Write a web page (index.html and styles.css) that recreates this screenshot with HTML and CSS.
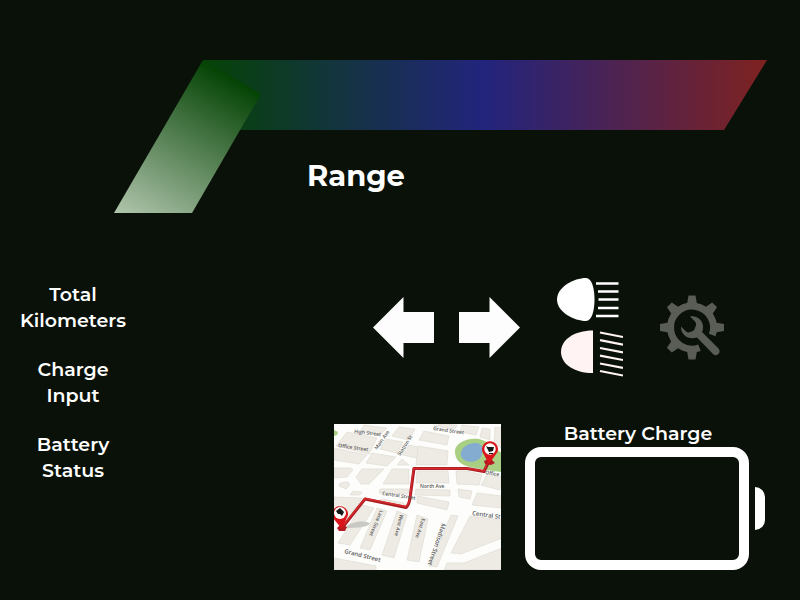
FILE: index.html
```html
<!DOCTYPE html>
<html lang="en">
<head>
<meta charset="utf-8">
<meta name="viewport" content="width=device-width, initial-scale=1">
<title>Range</title>
<link rel="stylesheet" href="styles.css">
</head>
<body>
<header class="gauge">
  <svg class="gauge-art" viewBox="0 0 800 213" aria-hidden="true">
    <defs>
      <linearGradient id="bar" gradientUnits="userSpaceOnUse" x1="203" y1="0" x2="767" y2="0">
        <stop offset="0" stop-color="#064306"/>
        <stop offset=".5" stop-color="#22247d"/>
        <stop offset="1" stop-color="#7f2220"/>
      </linearGradient>
      <linearGradient id="foot" gradientUnits="userSpaceOnUse" x1="232" y1="77" x2="144" y2="229">
        <stop offset="0" stop-color="#044304"/>
        <stop offset="1" stop-color="#b0c5ac"/>
      </linearGradient>
    </defs>
    <path fill="url(#bar)" d="M203 60H767L724 130H203Z"/>
    <path fill="url(#foot)" d="M203 60L261 94L192 213H114Z"/>
  </svg>
  <h1 class="range">Range</h1>
</header>
<main class="panel">
  <section class="stats">
    <h2>Total Kilometers</h2>
    <h2>Charge Input</h2>
    <h2>Battery Status</h2>
  </section>
  <section class="side">
    <div class="controls">
      <div class="turns">
        <button aria-label="Left"><svg width="61" height="61" viewBox="0 0 61 61"><path fill="#fdfdfd" d="M0 30.5L30.5 0V15H61V46H30.5V61Z"/></svg></button>
        <button aria-label="Right"><svg width="61" height="61" viewBox="0 0 61 61"><path fill="#fdfdfd" d="M61 30.5L30.5 0V15H0V46H30.5V61Z"/></svg></button>
      </div>
      <div class="lamps">
        <button aria-label="High beam"><svg width="66" height="43" viewBox="0 0 66 43"><path fill="#fff" d="M0 21.5C0 9 17 0 29 0C35 0 37.500 11 37.500 21.500C37.500 32 35 43 29 43C17 43 0 34 0 21.500Z"/><path stroke="#fff" stroke-width="2.600" d="M39 5.500H61.500M41 13.500H61.500M41.500 21.500H61.500M41 30H61.500M39 38H61.500"/></svg></button>
        <button aria-label="Low beam"><svg width="66" height="47" viewBox="0 0 66 47"><path fill="#fff4f3" d="M36 0.500V43C17 43 4 34 4 21.700C4 10 17 0.500 36 0.500Z"/><path stroke="#fff4f3" stroke-width="2.200" d="M43 2.500L66 7M43 10.200L66 14.700M43 18L66 22.400M43 25.700L66 30M43 33.500L66 37.800M43 41L66 45.500"/></svg></button>
      </div>
      <button aria-label="Service"><svg width="64" height="65" viewBox="0 0 64 65">
        <defs><path id="tooth" d="M28.500 0.500H35.500L37.500 12H26.500Z"/></defs>
        <g fill="#595d55">
          <use href="#tooth"/>
          <use href="#tooth" transform="rotate(45 32 32.500)"/>
          <use href="#tooth" transform="rotate(90 32 32.500)"/>
          <use href="#tooth" transform="rotate(180 32 32.500)"/>
          <use href="#tooth" transform="rotate(225 32 32.500)"/>
          <use href="#tooth" transform="rotate(270 32 32.500)"/>
          <use href="#tooth" transform="rotate(315 32 32.500)"/>
          <path d="M30 21.500C37 20 44 26 43 33Q43 35 42 37L58.500 53.500C62 57.500 56.500 62.500 53 59L37 42.500C29 45.500 20.500 40 21 31.500L26 36.500Q28 38 30 37L33 36Q34.500 35 35 33L36 30Q36.500 28 35 26.500Z"/>
        </g>
        <path fill="none" stroke="#595d55" stroke-width="7" d="M39.500 52.700A21.500 21.500 0 1 1 52.200 40"/>
      </svg></button>
    </div>
    <div class="details">
      <svg class="map" viewBox="0 0 167 146" role="img" aria-label="Route map">
        <rect width="167" height="146" fill="#fdfdfc"/>
        <g fill="#eeebe5" stroke="#dcd8ce" stroke-width=".6">
          <path d="M13 8L43 14L35 30L2 22ZM30 1L53 4L46 11L26 7ZM65 3L81 5L75 16L58 12ZM52 15L69 18L63 29L46 25ZM75 21L97 26L94 37L65 30ZM0 24L33 31L25 40L0 36ZM38 29L62 33L53 42L32 39ZM68 35L75 41H63ZM0 44H17L19 46L13 53L0 54ZM28 45H50L35 60H27L22 53ZM58 45H75V60H49ZM6 59L14 58L16 61L12 65L5 62ZM46 65H75L74 70L45 69ZM19 67L28 68L26 71L16 71Z"/>
          <path d="M90 7L115 12L113 21L85 16ZM108 0L123 1L121 5L100 2ZM128 1L145 3L142 11L126 8ZM148 4L156 5V16L146 13ZM161 3L168 4V24L160 20ZM84 22L114 27L113 41H82ZM83 47H114L115 59H82ZM122 47H133L148 51L145 61L123 60ZM153 50L168 53L166 66L147 61ZM82 65L116 66V72L81 71ZM124 65L138 67L136 75L125 73Z"/>
          <path d="M28 81L40 84L16 121L4 119ZM43 84L53 87L36 126L26 124ZM63 87L73 91L60 134L48 131ZM83 91L94 95L85 138L73 136ZM41 78L48 75L70 79V82ZM0 73L28 74L14 94L0 90ZM0 134L42 142V146H0ZM83 72L115 78L113 86L83 79ZM117 91L124 92L103 143L95 142ZM136 92L168 96V114L127 130L117 129ZM168 124V146H110L113 139H130ZM143 69L168 72V84L138 81Z"/>
        </g>
        <path fill="#a9cf83" d="M0 6L4 8L3 11L0 12ZM121 28C120 20 132 13 145 15C154 17 161 25 168 29V48L152 46L136 43C127 41 121 36 121 28Z"/>
        <path fill="#83acd0" d="M127 32C125 24 135 18 143 19C151 21 149 28 147 33C143 40 129 39 127 32Z"/>
        <path fill="#c8c8c5" d="M10 104C17 98 27 96 36 99C34 104 19 104 10 104Z"/>
        <path fill="none" stroke="#a51d21" stroke-width="3" stroke-linejoin="round" d="M8 104L31 75L72 83.500Q75 81 76 74L80 44.500H133L150 47.500L155 37"/>
        <path fill="none" stroke="#d62a2e" stroke-width="1.500" stroke-linejoin="round" d="M8 103L31 74.500L72 82.500Q75 80 76 73L79.500 44.500H133L150 47L154 37"/>
        <g class="map-text">
          <text transform="translate(20 9) rotate(7)">High Street</text>
          <text transform="translate(4 23) rotate(8)">Office Street</text>
          <text transform="translate(43 26) rotate(-55)">Main Ave</text>
          <text transform="translate(66 32) rotate(-57)">Station St</text>
          <text transform="translate(99 6) rotate(8)">Grand Street</text>
          <text transform="translate(86 64)">North Ave</text>
          <text transform="translate(48 71) rotate(8)">Central Street</text>
          <text transform="translate(151 50) rotate(9)">Office</text>
          <text transform="translate(46 86) rotate(113)">Lane Street</text>
          <text transform="translate(66 90) rotate(104)">West Ave</text>
          <text transform="translate(88 94) rotate(109)">East Ave</text>
          <text class="large" transform="translate(108 99) rotate(109)">Madison Street</text>
          <text class="large" transform="translate(138 91) rotate(8)">Central St</text>
          <text class="large" transform="translate(10 129) rotate(14)">Grand Street</text>
        </g>
        <path fill="#b51a20" d="M150 37L154 35L158 36L161 39L157 41L151 40ZM3 104L7 100L13 103L11 107L5 107Z"/>
        <path fill="#d9141a" d="M155 40L148.500 28A8 8 0 1 1 163.500 28ZM8 105L-1 94A8 8 0 1 1 14 91Z"/>
        <circle cx="156" cy="25" r="5.700" fill="#fff"/>
        <circle cx="6" cy="89" r="6" fill="#fff"/>
        <path fill="#151515" d="M152 22L154 23H160L159 27L155 28ZM155 29H159V30H155ZM2 87L6 84L10 88L8 92L6 90L4 90Z"/>
      </svg>
      <section class="battery">
        <h2>Battery Charge</h2>
        <div class="battery-row">
          <div class="cell"></div>
          <div class="cap"></div>
        </div>
      </section>
    </div>
  </section>
</main>
</body>
</html>
```
FILE: styles.css
```css
* {
  box-sizing: border-box;
}

body {
  margin: 0;
  min-height: 100vh;
  background: #091108;
  color: #fff;
  font-family: Montserrat, Inter, sans-serif;
}

h1,
h2 {
  margin: 0;
}

h2 {
  font-size: 19px;
  font-weight: 600;
  line-height: 26px;
  text-align: center;
}

button {
  display: block;
  padding: 0;
  border: 0;
  background: none;
  cursor: pointer;
}

svg {
  display: block;
}

.gauge {
  display: grid;
}

.gauge-art,
.range {
  grid-area: 1 / 1;
}

.gauge-art {
  width: 100%;
}

.range {
  align-self: end;
  padding: 0 88px 18px 0;
  font-size: 29px;
  font-weight: 700;
  line-height: 38px;
  text-align: center;
}

.panel {
  display: grid;
  grid-template-columns: 146px 1fr;
  padding: 65px 35px 29px 0;
}

.stats {
  display: flex;
  flex-direction: column;
  gap: 23px;
  padding: 4px 18px 0;
}

.side {
  display: flex;
  flex-direction: column;
  gap: 44px;
}

.controls {
  display: flex;
  justify-content: flex-end;
  align-items: center;
  gap: 37px;
  padding-right: 41px;
}

.turns {
  display: flex;
  gap: 25px;
}

.lamps {
  display: grid;
  gap: 9px;
}

.details {
  display: flex;
  justify-content: flex-end;
  align-items: flex-end;
  gap: 24px;
}

.map {
  width: 167px;
}

.map-text {
  fill: #5a5a5a;
  font-family: "Open Sans", sans-serif;
  font-size: 5px;
  font-weight: 600;
}

.map-text .large {
  font-size: 6px;
}

.battery {
  width: 240px;
}

.battery-row {
  display: flex;
  align-items: center;
  gap: 6px;
}

.battery h2 {
  padding-right: 14px;
}

.cell {
  flex: 1;
  height: 123px;
  border: 10px solid #fff;
  border-radius: 16px;
}

.cap {
  width: 10px;
  height: 43px;
  border-radius: 0 10px 10px 0;
  background: #fff;
}
```
